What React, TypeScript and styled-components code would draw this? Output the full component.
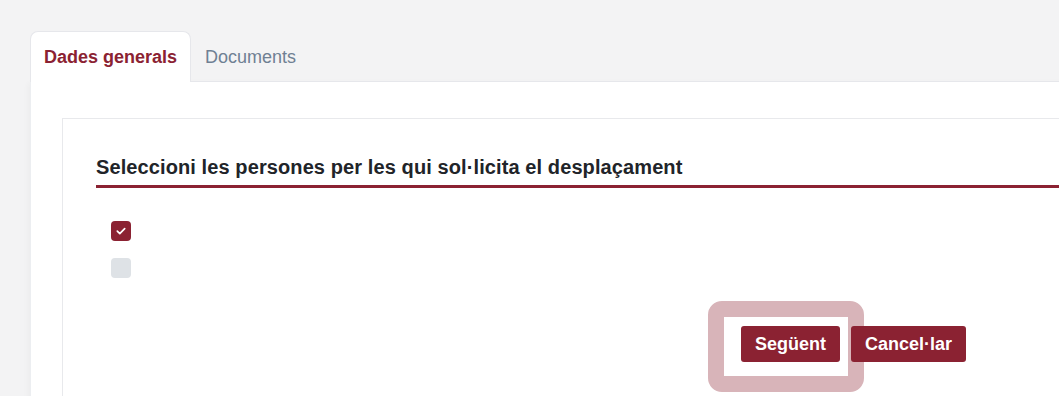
import React, { useState } from 'react';
import styled, { createGlobalStyle } from 'styled-components';

const GlobalStyle = createGlobalStyle`
  body {
    margin: 0;
    background: #f3f3f4;
    font-family: "Liberation Sans", Arial, sans-serif;
    overflow: hidden;
  }
`;

const Page = styled.div`
  padding: 30px 0 0 30px;
  width: 1100px;
`;

const TabBar = styled.div`
  display: flex;
  align-items: flex-end;
  height: 51px;
`;

const Tab = styled.button<{ active?: boolean }>`
  height: 51px;
  padding: 0 13px;
  border: 1px solid ${p => (p.active ? '#e6e7eb' : 'transparent')};
  border-bottom: none;
  border-radius: 8px 8px 0 0;
  background: ${p => (p.active ? '#fff' : 'transparent')};
  color: ${p => (p.active ? '#8b2232' : '#6f8093')};
  font-family: inherit;
  font-size: 18px;
  font-weight: ${p => (p.active ? 700 : 400)};
  cursor: pointer;
  position: relative;
  z-index: 1;
  margin-bottom: -1px;
`;

const Panel = styled.div`
  background: #fff;
  border-top: 1px solid #e6e7eb;
  border-left: 1px solid #eceef1;
  box-shadow: -2px 2px 6px rgba(0, 0, 0, 0.03);
  padding: 36px 0 0 31px;
  height: 400px;
`;

const Card = styled.div`
  border: 1px solid #e8e9ec;
  border-right: none;
  padding: 37px 0 0 33px;
  height: 400px;
`;

const Heading = styled.h2`
  margin: 0;
  font-size: 20px;
  letter-spacing: 0.1px;
  line-height: 23px;
  font-weight: 700;
  color: #212429;
  padding-bottom: 6px;
  border-bottom: 3px solid #8b2232;
`;

const CheckList = styled.div`
  display: flex;
  flex-direction: column;
  gap: 17px;
  padding: 33px 0 0 15px;
`;

const Box = styled.span<{ checked?: boolean }>`
  width: 20px;
  height: 20px;
  border-radius: 4px;
  background: ${p => (p.checked ? '#8b2232' : '#dee2e6')};
  display: flex;
  align-items: center;
  justify-content: center;
  cursor: pointer;
`;

const Actions = styled.div`
  display: flex;
  gap: 11px;
  padding: 48px 0 0 645px;
`;

const Button = styled.button<{ focused?: boolean }>`
  position: relative;
  height: 36px;
  padding: 0 14px;
  border: none;
  border-radius: 3px;
  background: #8b2232;
  color: #fff;
  font-family: inherit;
  font-size: 18px;
  font-weight: 700;
  cursor: pointer;

  &::before {
    content: '';
    display: ${p => (p.focused ? 'block' : 'none')};
    position: absolute;
    top: -25px;
    left: -33px;
    right: -24px;
    bottom: -30px;
    border: 16px solid #d8b4b9;
    border-radius: 14px;
    pointer-events: none;
  }
`;

const Check = () => (
  <svg width="12" height="12" viewBox="0 0 12 12" fill="none">
    <path d="M2.3 6.2l2.5 2.4 4.9-5" stroke="#fff" strokeWidth="1.7" strokeLinecap="round" strokeLinejoin="round" />
  </svg>
);

export default function App() {
  const [tab, setTab] = useState(0);
  const [checks, setChecks] = useState([true, false]);

  const toggle = (i: number) => setChecks(prev => prev.map((c, j) => (j === i ? !c : c)));

  return (
    <>
      <GlobalStyle />
      <Page>
        <TabBar>
          <Tab active={tab === 0} onClick={() => setTab(0)}>Dades generals</Tab>
          <Tab active={tab === 1} onClick={() => setTab(1)}>Documents</Tab>
        </TabBar>
        <Panel>
          <Card>
            <Heading>Seleccioni les persones per les qui sol·licita el desplaçament</Heading>
            <CheckList>
              {checks.map((c, i) => (
                <Box key={i} checked={c} onClick={() => toggle(i)}>
                  {c && <Check />}
                </Box>
              ))}
            </CheckList>
            <Actions>
              <Button focused>Següent</Button>
              <Button>Cancel·lar</Button>
            </Actions>
          </Card>
        </Panel>
      </Page>
    </>
  );
}
